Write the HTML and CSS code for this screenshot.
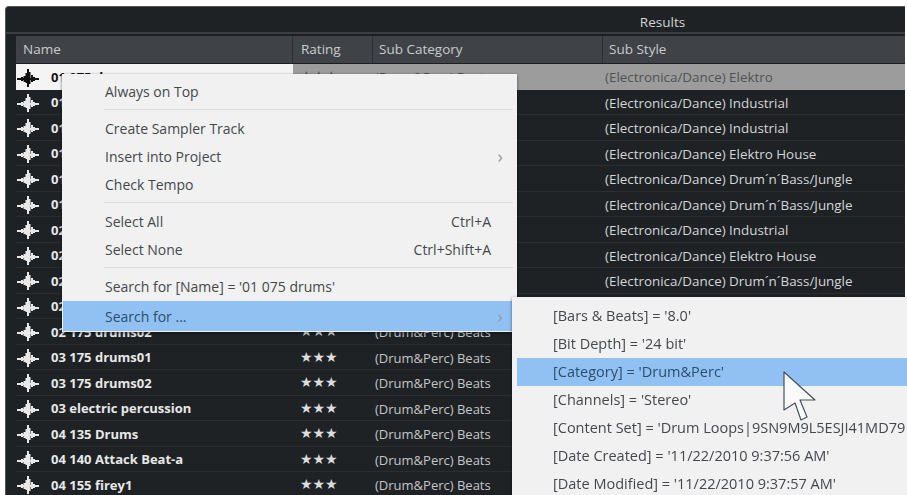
FILE: index.html
```html
<!DOCTYPE html>
<html>
<head lang="en">
    <meta charset="UTF-8">
    <title>Results</title>
    <link rel="stylesheet" href="styles.css">
</head>
<body>
    <svg class="defs" width="0" height="0">
      <symbol id="wave" viewBox="0 0 22 20">
        <path d="M0 11H22M5 9V13M7.500 8V14M9.500 5V15M11 1V19M12.500 4V16M15 7V14M17 9V13" fill="none" stroke="currentColor" stroke-width="2"/>
      </symbol>
    </svg>
    <div id="main">
      <div class="panel">
        <div class="title">Results</div>
        <div class="row head">
          <div class="name">Name</div>
          <div class="rating">Rating</div>
          <div class="cat">Sub Category</div>
          <div class="style">Sub Style</div>
        </div>
        <div class="row selected">
          <div class="name"><svg class="icon"><use href="#wave"/></svg>01 075 drums</div>
          <div class="rating">★★★</div>
          <div class="cat">(Drum&amp;Perc) Beats</div>
          <div class="style">(Electronica/Dance) Elektro</div>
        </div>
        <div class="row"><div class="name"><svg class="icon"><use href="#wave"/></svg>01</div><div class="rating"></div><div class="cat"></div><div class="style">(Electronica/Dance) Industrial</div></div>
        <div class="row"><div class="name"><svg class="icon"><use href="#wave"/></svg>01</div><div class="rating"></div><div class="cat"></div><div class="style">(Electronica/Dance) Industrial</div></div>
        <div class="row"><div class="name"><svg class="icon"><use href="#wave"/></svg>01</div><div class="rating"></div><div class="cat"></div><div class="style">(Electronica/Dance) Elektro House</div></div>
        <div class="row"><div class="name"><svg class="icon"><use href="#wave"/></svg>01</div><div class="rating"></div><div class="cat"></div><div class="style">(Electronica/Dance) Drum´n´Bass/Jungle</div></div>
        <div class="row"><div class="name"><svg class="icon"><use href="#wave"/></svg>01</div><div class="rating"></div><div class="cat"></div><div class="style">(Electronica/Dance) Drum´n´Bass/Jungle</div></div>
        <div class="row"><div class="name"><svg class="icon"><use href="#wave"/></svg>02</div><div class="rating"></div><div class="cat"></div><div class="style">(Electronica/Dance) Industrial</div></div>
        <div class="row"><div class="name"><svg class="icon"><use href="#wave"/></svg>02</div><div class="rating"></div><div class="cat"></div><div class="style">(Electronica/Dance) Elektro House</div></div>
        <div class="row"><div class="name"><svg class="icon"><use href="#wave"/></svg>02</div><div class="rating"></div><div class="cat"></div><div class="style">(Electronica/Dance) Drum´n´Bass/Jungle</div></div>
        <div class="row"><div class="name"><svg class="icon"><use href="#wave"/></svg>02</div><div class="rating"></div><div class="cat"></div><div class="style"></div></div>
        <div class="row"><div class="name"><svg class="icon"><use href="#wave"/></svg>02 175 drums02</div><div class="rating">★★★</div><div class="cat">(Drum&amp;Perc) Beats</div><div class="style"></div></div>
        <div class="row"><div class="name"><svg class="icon"><use href="#wave"/></svg>03 175 drums01</div><div class="rating">★★★</div><div class="cat">(Drum&amp;Perc) Beats</div><div class="style"></div></div>
        <div class="row"><div class="name"><svg class="icon"><use href="#wave"/></svg>03 175 drums02</div><div class="rating">★★★</div><div class="cat">(Drum&amp;Perc) Beats</div><div class="style"></div></div>
        <div class="row"><div class="name"><svg class="icon"><use href="#wave"/></svg>03 electric percussion</div><div class="rating">★★★</div><div class="cat">(Drum&amp;Perc) Beats</div><div class="style"></div></div>
        <div class="row"><div class="name"><svg class="icon"><use href="#wave"/></svg>04 135 Drums</div><div class="rating">★★★</div><div class="cat">(Drum&amp;Perc) Beats</div><div class="style"></div></div>
        <div class="row"><div class="name"><svg class="icon"><use href="#wave"/></svg>04 140 Attack Beat-a</div><div class="rating">★★★</div><div class="cat">(Drum&amp;Perc) Beats</div><div class="style"></div></div>
        <div class="row"><div class="name"><svg class="icon"><use href="#wave"/></svg>04 155 firey1</div><div class="rating">★★★</div><div class="cat">(Drum&amp;Perc) Beats</div><div class="style"></div></div>
      </div>

      <div class="menu" id="context-menu">
        <div class="item">Always on Top</div>
        <div class="sep"></div>
        <div class="item">Create Sampler Track</div>
        <div class="item">Insert into Project<span class="arrow">&#8250;</span></div>
        <div class="item">Check Tempo</div>
        <div class="sep"></div>
        <div class="item">Select All<span class="keys">Ctrl+A</span></div>
        <div class="item">Select None<span class="keys">Ctrl+Shift+A</span></div>
        <div class="sep"></div>
        <div class="item">Search for [Name] = '01 075 drums'</div>
        <div class="item active">Search for ...<span class="arrow">&#8250;</span></div>
      </div>

      <div class="menu" id="search-menu">
        <div class="item">[Bars &amp; Beats] = '8.0'</div>
        <div class="item">[Bit Depth] = '24 bit'</div>
        <div class="item active">[Category] = 'Drum&amp;Perc'</div>
        <div class="item">[Channels] = 'Stereo'</div>
        <div class="item">[Content Set] = 'Drum Loops|9SN9M9L5ESJI41MD79</div>
        <div class="item">[Date Created] = '11/22/2010 9:37:56 AM'</div>
        <div class="item">[Date Modified] = '11/22/2010 9:37:57 AM'</div>
      </div>

      <svg class="cursor" width="36" height="54" viewBox="0 0 36 54">
        <path d="M1 2V40L12 33L18 50L24 47L17 30H32Z" fill="#fafafa" stroke="#46505a" stroke-width="1.200" stroke-linejoin="round"/>
      </svg>
    </div>
</body>
</html>
```

FILE: styles.css
```css
body, html {
    border: 0;
    padding: 0;
    margin: 0;
    overflow: hidden;
    background-color: white;
    font-family: "Open Sans", sans-serif;
}

.defs {
    display: block;
}

#main {
    position: relative;
    width: 907px;
    height: 495px;
    padding: 6px 2px 0 5px;
    box-sizing: border-box;
    overflow: hidden;
    filter: blur(0.5px);
}

.panel {
    height: 520px;
    padding: 3px 0 0 10px;
    box-sizing: border-box;
    background-color: #1e2225;
    border-left: 1px solid #555;
    border-top: 1px solid #555;
    border-radius: 4px 0 0 0;
    color: #e4e4e4;
    font-size: 13px;
}

.title {
    height: 22px;
    line-height: 25px;
    margin-left: -10px;
    text-align: center;
    font-size: 13.500px;
    padding-left: 414px;
    color: #d4d4d4;
    border-bottom: 2px solid #3a3e41;
    margin-bottom: 2px;
}

.row {
    display: flex;
    height: 25.500px;
    line-height: 27px;
    box-sizing: border-box;
    border-bottom: 1px solid #2a2e31;
    white-space: nowrap;
}

.name {
    width: 277px;
    padding: 2px 0 0 6px;
    box-sizing: border-box;
    font-weight: bold;
    color: #e8e8e8;
    display: flex;
    align-items: center;
}

.rating {
    width: 80px;
    padding-left: 7px;
    box-sizing: border-box;
    line-height: 25px;
    font-size: 14px;
    font-family: "DejaVu Sans", sans-serif;
    color: #dcdcdc;
}

.cat {
    width: 230px;
    padding-left: 2px;
    box-sizing: border-box;
    color: #c4c6c8;
}

.style {
    padding-left: 2px;
    font-size: 13.400px;
    color: #d4d6d8;
}

.head {
    height: 28px;
    line-height: 27px;
    background-color: #3f4347;
    border-bottom: 1px solid #1c1f22;
}

.head .name,
.head .rating,
.head .cat,
.head .style {
    font-family: "Open Sans", sans-serif;
    font-size: 13.500px;
    font-weight: normal;
    line-height: 27px;
    color: #c9cbcd;
    border-right: 1px solid #2c3033;
}

.head .name {
    padding: 0 0 0 7px;
}

.head .rating {
    padding-left: 8px;
}

.head .cat {
    padding-left: 6px;
}

.head .style {
    padding-left: 6px;
    border-right: 0;
}

.selected {
    background-color: #9c9c9c;
    border-bottom: 0;
}

.selected .name {
    background-color: #f4f4f4;
    color: #111;
}

.selected .rating,
.selected .cat,
.selected .style {
    color: #505254;
}

.icon {
    width: 22px;
    height: 20px;
    margin-left: -5px;
    margin-right: 12px;
    flex: none;
}

.menu {
    position: absolute;
    background-color: #f1f1f1;
    color: #44484c;
    font-size: 14px;
    box-shadow: 0 1px 3px rgba(0, 0, 0, 0.5);
}

#context-menu {
    left: 62px;
    top: 74px;
    width: 455px;
    padding-top: 3px;
    box-sizing: border-box;
}

#context-menu .item {
    display: flex;
    justify-content: space-between;
    align-items: center;
    height: 28px;
    padding: 0 26px 0 43px;
}

#context-menu .sep {
    height: 1px;
    margin: 4px 4px 4px 42px;
    background-color: #dcdcdc;
}

#context-menu .active {
    height: 30px;
    margin: 1px 0 1px 1px;
    padding-left: 42px;
}

#search-menu {
    left: 512px;
    top: 297px;
    width: 395px;
    height: 198px;
    padding-top: 5px;
    box-sizing: border-box;
    overflow: hidden;
    white-space: nowrap;
    font-size: 14.500px;
}

#search-menu .item {
    height: 28px;
    line-height: 28px;
    padding-left: 41px;
}

.active {
    background-color: #90c1f2;
    color: #2e4d6e;
}

#search-menu .active {
    margin-left: 5px;
    padding-left: 36px;
}

.arrow {
    color: #9a9a9a;
    font-size: 18px;
    line-height: 18px;
    margin-right: -12px;
}

.keys {
    color: #44484c;
}

.cursor {
    position: absolute;
    left: 783px;
    top: 370px;
}
```
